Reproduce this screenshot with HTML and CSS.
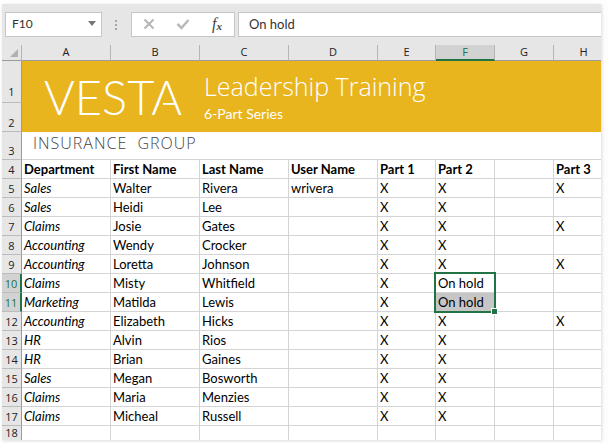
FILE: index.html
```html
<!DOCTYPE html>
<html lang="en">

<head>
    <meta charset="UTF-8">
    <meta name="viewport" content="width=device-width, initial-scale=1.0">
    <title>Leadership Training</title>
    <link rel="stylesheet" href="styles.css">
</head>

<body>
    <main class="workbook">
        <div class="formula-bar">
            <div class="name-box">
                <input type="text" class="name-input" aria-label="Name Box" value="F10">
                <button class="name-btn" aria-label="Show names">
                    <svg width="8" height="5" viewBox="0 0 8 5"><path d="M0 0h8L4 5z" fill="#777" /></svg>
                </button>
            </div>
            <svg class="grip" width="3" height="12" viewBox="0 0 3 12"><path d="M0 1h2v2H0zM0 5h2v2H0zM0 9h2v2H0z" fill="#a6a6a6" /></svg>
            <div class="actions">
                <button class="action-btn" aria-label="Cancel">
                    <svg width="12" height="12" viewBox="0 0 12 12"><path d="M1.500 1.500l9 9M10.500 1.500l-9 9" fill="none" stroke="#b5b5b5" stroke-width="2" /></svg>
                </button>
                <button class="action-btn" aria-label="Enter">
                    <svg width="14" height="12" viewBox="0 0 14 12"><path d="M1.500 6l4 4L12.500 2" fill="none" stroke="#b9b9b9" stroke-width="2.500" /></svg>
                </button>
                <button class="action-btn fx" aria-label="Insert Function"><i>f</i><sub>x</sub></button>
            </div>
            <input type="text" class="formula-input" aria-label="Formula Bar" value="On hold">
        </div>

        <table class="sheet">
            <colgroup>
                <col class="col-num">
                <col class="col-name" span="4">
                <col class="col-first">
                <col class="col-part" span="2">
                <col>
            </colgroup>
            <thead>
                <tr>
                    <th class="corner"><svg width="8" height="8" viewBox="0 0 8 8"><path d="M8 0v8H0z" fill="#b1b1b1" /></svg></th>
                    <th>A</th>
                    <th>B</th>
                    <th>C</th>
                    <th>D</th>
                    <th>E</th>
                    <th class="active">F</th>
                    <th>G</th>
                    <th>H</th>
                </tr>
            </thead>
            <tbody>
                <tr class="row-title">
                    <th>1</th>
                    <td class="banner" colspan="8" rowspan="2">
                        <div class="banner-inner">
                            <div class="logo">VESTA</div>
                            <div class="titles">
                                <h1 class="title">Leadership Training</h1>
                                <p class="subtitle">6-Part Series</p>
                            </div>
                        </div>
                    </td>
                </tr>
                <tr class="row-subtitle">
                    <th>2</th>
                </tr>
                <tr class="row-group">
                    <th>3</th>
                    <td class="group" colspan="8">INSURANCE&nbsp; GROUP</td>
                </tr>
                <tr class="labels"><th>4</th><td>Department</td><td>First Name</td><td>Last Name</td><td>User Name</td><td>Part 1</td><td>Part 2</td><td></td><td>Part 3</td></tr>
                <tr><th>5</th><td>Sales</td><td>Walter</td><td>Rivera</td><td>wrivera</td><td>X</td><td>X</td><td></td><td>X</td></tr>
                <tr><th>6</th><td>Sales</td><td>Heidi</td><td>Lee</td><td></td><td>X</td><td>X</td><td></td><td></td></tr>
                <tr><th>7</th><td>Claims</td><td>Josie</td><td>Gates</td><td></td><td>X</td><td>X</td><td></td><td>X</td></tr>
                <tr><th>8</th><td>Accounting</td><td>Wendy</td><td>Crocker</td><td></td><td>X</td><td>X</td><td></td><td></td></tr>
                <tr><th>9</th><td>Accounting</td><td>Loretta</td><td>Johnson</td><td></td><td>X</td><td>X</td><td></td><td>X</td></tr>
                <tr><th class="active">10</th><td>Claims</td><td>Misty</td><td>Whitfield</td><td></td><td>X</td><td class="current">On hold<span class="selection"></span></td><td></td><td></td></tr>
                <tr><th class="active">11</th><td>Marketing</td><td>Matilda</td><td>Lewis</td><td></td><td>X</td><td class="selected">On hold</td><td></td><td></td></tr>
                <tr><th>12</th><td>Accounting</td><td>Elizabeth</td><td>Hicks</td><td></td><td>X</td><td>X</td><td></td><td>X</td></tr>
                <tr><th>13</th><td>HR</td><td>Alvin</td><td>Rios</td><td></td><td>X</td><td>X</td><td></td><td></td></tr>
                <tr><th>14</th><td>HR</td><td>Brian</td><td>Gaines</td><td></td><td>X</td><td>X</td><td></td><td></td></tr>
                <tr><th>15</th><td>Sales</td><td>Megan</td><td>Bosworth</td><td></td><td>X</td><td>X</td><td></td><td></td></tr>
                <tr><th>16</th><td>Claims</td><td>Maria</td><td>Menzies</td><td></td><td>X</td><td>X</td><td></td><td></td></tr>
                <tr><th>17</th><td>Claims</td><td>Micheal</td><td>Russell</td><td></td><td>X</td><td>X</td><td></td><td></td></tr>
                <tr class="row-last"><th>18</th><td></td><td></td><td></td><td></td><td></td><td></td><td></td><td></td></tr>
            </tbody>
        </table>
    </main>
</body>

</html>
```
FILE: styles.css
```css
* {
    margin: 0;
    padding: 0;
    box-sizing: border-box;
}

body {
    background-color: #fdfdfd;
    font-family: Lato, "Liberation Sans", sans-serif;
    font-size: 13px;
    color: #000;
}

.workbook {
    margin: 4px 7px 3px 2px;
    background-color: #e6e6e6;
    box-shadow: 1px 1px 3px #ddd;
    overflow: hidden;
}

.formula-bar {
    display: flex;
    align-items: center;
    padding: 8px 0 8px 3px;
}

.name-box,
.actions,
.formula-input {
    height: 25px;
    background-color: #fff;
    border: 1px solid #c6c6c6;
}

.name-box {
    display: flex;
    width: 97px;
}

.name-input {
    width: 76px;
    padding: 0 0 2px 6px;
    border: none;
    font: inherit;
    font-size: 12px;
    color: #333;
}

.name-btn,
.action-btn {
    flex: 1;
    display: flex;
    align-items: center;
    justify-content: center;
    border: none;
    background: none;
}

.name-btn {
    padding-bottom: 2px;
}

.grip {
    margin: 0 13px;
}

.actions {
    display: flex;
    width: 104px;
    padding-bottom: 2px;
}

.fx {
    font: 16px "Liberation Serif", serif;
    color: #444;
}

.fx sub {
    font: italic bold 11px "Liberation Serif", serif;
    padding-top: 5px;
}

.formula-input {
    flex: 1;
    min-width: 0;
    margin-left: 3px;
    padding: 0 0 2px 10px;
    border-right: none;
    font: inherit;
    color: #333;
}

.sheet {
    width: 100%;
    table-layout: fixed;
    border-collapse: separate;
    border-spacing: 0;
}

.col-num {
    width: 20px;
}

.col-name {
    width: 89px;
}

.col-first {
    width: 58px;
}

.col-part {
    width: 59px;
}

.sheet tr {
    height: 19px;
}

.sheet thead tr {
    height: 16px;
}

.sheet .row-title {
    height: 42px;
}

.sheet .row-subtitle {
    height: 29px;
}

.sheet .row-group {
    height: 28px;
}

.sheet .row-last {
    height: 14px;
}

th {
    padding-bottom: 1px;
    font-family: "Open Sans", "Liberation Sans", sans-serif;
    font-size: 11px;
    font-weight: 400;
    line-height: 14px;
    vertical-align: bottom;
    color: #222;
    border-right: 1px solid #9b9b9b;
    border-bottom: 1px solid #bcbcbc;
}

thead th {
    border-right-color: #b5b5b5;
    border-bottom-color: #9b9b9b;
}

/* column H runs on past the edge of the window */
thead th:last-child {
    padding-left: 12px;
    border-right: none;
}

thead .active {
    padding-bottom: 0;
    border-bottom: 2px solid #217346;
}

tbody .active {
    border-right: 2px solid #217346;
}

.active {
    background-color: #d2d2d2;
    color: #217346;
}

.row-title th {
    padding-bottom: 3px;
}

.row-last th {
    padding-bottom: 0;
}

.row-last th,
.row-last td {
    line-height: 14px;
    border-bottom: none;
}

.corner {
    padding-right: 3px;
}

.corner svg {
    display: block;
    margin: 0 0 2px auto;
}

td {
    padding: 0 0 1px 2px;
    line-height: 16px;
    vertical-align: bottom;
    white-space: nowrap;
    background-color: #fff;
    border-right: 1px solid #d4d4d4;
    border-bottom: 1px solid #d4d4d4;
}

td:last-child {
    border-right: none;
}

th + td {
    font-style: italic;
}

.labels td {
    font-weight: 700;
    font-style: normal;
}

.sheet .banner {
    padding: 0;
    background-color: #e8b51f;
    border: none;
    color: #fff;
    font-style: normal;
    vertical-align: top;
}

.banner-inner {
    display: flex;
    padding: 9px 0 0 22px;
}

/* stencil lettering: the V and the A are each cut open on one side */
.logo {
    position: relative;
    width: 160px;
    font-size: 47px;
    font-weight: 300;
    line-height: 54px;
}

.logo::before,
.logo::after {
    content: "";
    position: absolute;
    background-color: #e8b51f;
}

.logo::before {
    top: 38px;
    left: 19px;
    width: 5px;
    height: 5px;
}

.logo::after {
    top: 33px;
    left: 115px;
    width: 4px;
    height: 5px;
}

.title {
    font-family: "Open Sans", "Liberation Sans", sans-serif;
    font-size: 25px;
    font-weight: 300;
    line-height: 32px;
}

.subtitle {
    font-size: 14px;
    line-height: 24px;
}

.sheet .group {
    padding: 0 0 8px 11px;
    font-family: "Open Sans", "Liberation Sans", sans-serif;
    font-size: 16px;
    font-weight: 300;
    font-style: normal;
    letter-spacing: 1px;
    color: #444;
}

.current {
    position: relative;
}

.selected {
    background-color: #c6c6c6;
}

.selection {
    position: absolute;
    top: -2px;
    left: -2px;
    width: 62px;
    height: 41px;
    border: 2px solid #217346;
}

.selection::after {
    content: "";
    position: absolute;
    right: -3px;
    bottom: -3px;
    width: 5px;
    height: 5px;
    background-color: #217346;
    outline: 1px solid #fff;
}
```
